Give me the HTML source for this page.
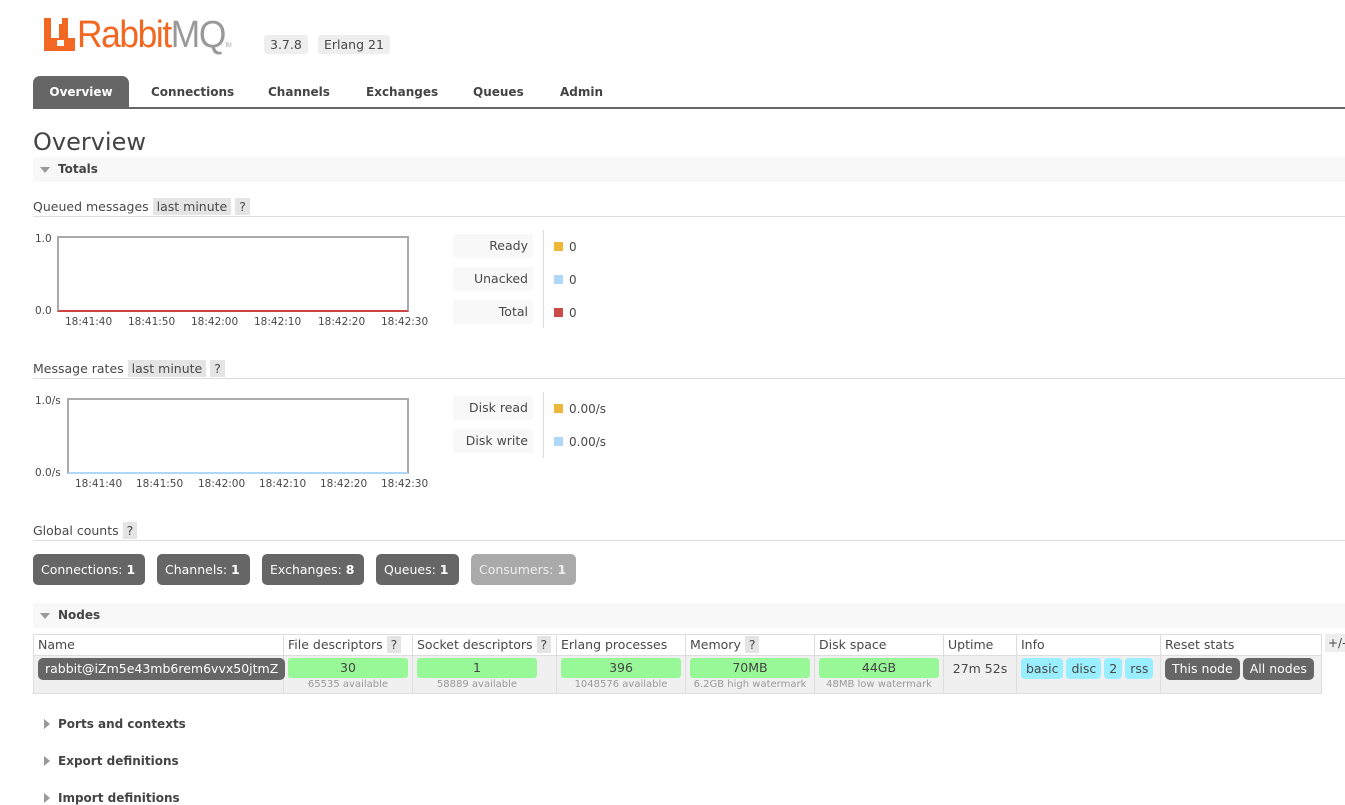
<!DOCTYPE html>
<html><head><meta charset="utf-8"><style>
*{box-sizing:border-box;margin:0;padding:0}
body{width:1345px;height:795px;overflow:hidden;background:#fff;font-family:"DejaVu Sans","Liberation Sans",sans-serif;font-size:12px;color:#484848;position:relative}
.a{position:absolute;white-space:nowrap}
.tab{position:absolute;top:76px;height:32px;line-height:32px;font-weight:bold;font-size:12px;color:#444}
.sec{position:absolute;left:33px;width:1312px;height:25px;background:#f8f8f8;font-weight:bold;font-size:12px;line-height:25px;padding-left:25px;color:#444}
.tri{position:absolute;left:7px;top:10px;width:0;height:0;border-left:5px solid transparent;border-right:5px solid transparent;border-top:6px solid #999}
.trr{position:absolute;left:11px;width:0;height:0;border-top:5px solid transparent;border-bottom:5px solid transparent;border-left:6px solid #999}
.hdr{position:absolute;left:33px;width:1312px;height:20px;border-bottom:1px solid #ddd;font-size:12.5px;line-height:20px}
.g{background:#e4e4e4;padding:1px 4px}
.lab{position:absolute;width:80px;height:24px;background:#f8f8f8;border-radius:3px;text-align:right;padding-right:5px;line-height:24px;font-size:12.5px}
.sq{display:inline-block;width:9px;height:9px;margin-right:6px}
.btn{position:absolute;top:554px;height:31px;line-height:31px;background:#666;color:#fff;border-radius:5px;padding:0 8px;font-size:12.5px}
td,th{border:1px solid #ddd;font-weight:normal;text-align:left;padding:0 4px;vertical-align:top}
.gr{background:#98f898;border-radius:3px;text-align:center;height:20px;line-height:20px;color:#444}
.sm{font-size:10px;color:#999;text-align:center;line-height:13px}
.cy{display:inline-block;background:#99eeff;border-radius:4px;padding:0 5px;height:21px;line-height:21px;margin-right:3px;font-size:12.5px}
.dk{display:inline-block;background:#666;color:#fff;border-radius:5px;padding:0 7px;height:22px;line-height:22px;margin-right:3px;font-size:12.5px}
.t{position:absolute;font-size:10.5px}
</style></head><body>
<div class="a" style="left:44px;top:18px;width:31px;height:33px">
<svg width="31" height="33"><path d="M0 0h7v20h8v-14h3v-6h6v20h7v13h-31z" fill="#f26822"/><rect x="13" y="22" width="7" height="6" fill="#fff"/></svg></div>
<div class="a" style="left:77px;top:14px;font-family:'Liberation Sans',sans-serif;font-size:38px;color:#f26822;letter-spacing:-1.5px;transform:scaleX(0.93);transform-origin:left">Rabbit<span style="color:#999">MQ</span><span style="font-size:6px;color:#aaa">TM</span></div>
<div class="a" style="left:264px;top:35px;background:#eee;padding:2px 6px;border-radius:3px;font-size:12.5px">3.7.8</div>
<div class="a" style="left:318px;top:35px;background:#eee;padding:2px 6px;border-radius:3px;font-size:12.5px">Erlang 21</div>
<div class="tab" style="left:33px;width:96px;background:#666;color:#fff;border-radius:7px 7px 0 0;text-align:center">Overview</div>
<div class="tab" style="left:151px">Connections</div>
<div class="tab" style="left:268px">Channels</div>
<div class="tab" style="left:366px">Exchanges</div>
<div class="tab" style="left:473px">Queues</div>
<div class="tab" style="left:560px">Admin</div>
<div class="a" style="left:33px;top:107px;width:1312px;height:2px;background:#666"></div>
<div class="a" style="left:33px;top:128px;font-size:24px;color:#444">Overview</div>
<div class="sec" style="top:157px"><div class="tri"></div>Totals</div>
<div class="hdr" style="top:197px">Queued messages <span class="g">last minute</span> <span class="g">?</span></div>
<div class="a" style="left:35px;top:233px;font-size:10.5px">1.0</div>
<div class="a" style="left:35px;top:305px;font-size:10.5px">0.0</div>
<div class="a" style="left:57px;top:236px;width:352px;height:76px;border:2px solid #aaa;border-bottom:2px solid #c44"></div>
<div class="a" style="top:316px;left:0">
<span class="t" style="left:65px">18:41:40</span><span class="t" style="left:128px">18:41:50</span><span class="t" style="left:191px">18:42:00</span><span class="t" style="left:254px">18:42:10</span><span class="t" style="left:318px">18:42:20</span><span class="t" style="left:381px">18:42:30</span></div>
<div class="lab" style="left:453px;top:234px">Ready</div>
<div class="lab" style="left:453px;top:267px">Unacked</div>
<div class="lab" style="left:453px;top:300px">Total</div>
<div class="a" style="left:543px;top:230px;width:1px;height:98px;background:#ddd"></div>
<div class="a" style="left:554px;top:240px"><span class="sq" style="background:#edb73a"></span>0</div>
<div class="a" style="left:554px;top:273px"><span class="sq" style="background:#afd8f8"></span>0</div>
<div class="a" style="left:554px;top:306px"><span class="sq" style="background:#cb4b4b"></span>0</div>
<div class="hdr" style="top:359px">Message rates <span class="g">last minute</span> <span class="g">?</span></div>
<div class="a" style="left:35px;top:395px;font-size:10.5px">1.0/s</div>
<div class="a" style="left:35px;top:467px;font-size:10.5px">0.0/s</div>
<div class="a" style="left:67px;top:398px;width:342px;height:76px;border:2px solid #aaa;border-bottom:2px solid #afd8f8"></div>
<div class="a" style="top:478px;left:0">
<span class="t" style="left:75px">18:41:40</span><span class="t" style="left:136px">18:41:50</span><span class="t" style="left:198px">18:42:00</span><span class="t" style="left:259px">18:42:10</span><span class="t" style="left:320px">18:42:20</span><span class="t" style="left:381px">18:42:30</span></div>
<div class="lab" style="left:453px;top:396px">Disk read</div>
<div class="lab" style="left:453px;top:429px">Disk write</div>
<div class="a" style="left:543px;top:392px;width:1px;height:66px;background:#ddd"></div>
<div class="a" style="left:554px;top:402px"><span class="sq" style="background:#edb73a"></span>0.00/s</div>
<div class="a" style="left:554px;top:435px"><span class="sq" style="background:#afd8f8"></span>0.00/s</div>
<div class="hdr" style="top:521px">Global counts <span class="g">?</span></div>
<div class="btn" style="left:33px;width:112px">Connections: <b>1</b></div>
<div class="btn" style="left:157px;width:93px">Channels: <b>1</b></div>
<div class="btn" style="left:262px;width:102px">Exchanges: <b>8</b></div>
<div class="btn" style="left:376px;width:83px">Queues: <b>1</b></div>
<div class="btn" style="left:471px;width:105px;background:#aaa;color:#eee">Consumers: <b>1</b></div>
<div class="sec" style="top:603px"><div class="tri"></div>Nodes</div>
<table class="a" style="left:33px;top:634px;border-collapse:collapse;font-size:12.5px;table-layout:fixed;width:1288px">
<colgroup><col style="width:250px"><col style="width:129px"><col style="width:144px"><col style="width:129px"><col style="width:129px"><col style="width:129px"><col style="width:73px"><col style="width:144px"><col style="width:161px"></colgroup>
<tr style="height:21px;line-height:19px"><th>Name</th><th>File descriptors <span class="g">?</span></th><th>Socket descriptors <span class="g">?</span></th><th>Erlang processes</th><th>Memory <span class="g">?</span></th><th>Disk space</th><th>Uptime</th><th>Info</th><th>Reset stats</th></tr>
<tr style="height:38px;background:#f0f0f0"><td style="padding-top:2px"><span class="dk" style="padding:0 7px">rabbit@iZm5e43mb6rem6vvx50jtmZ</span></td>
<td style="padding-top:2px"><div class="gr">30</div><div class="sm">65535 available</div></td>
<td style="padding-top:2px"><div class="gr" style="width:120px">1</div><div class="sm" style="width:120px">58889 available</div></td>
<td style="padding-top:2px"><div class="gr">396</div><div class="sm">1048576 available</div></td>
<td style="padding-top:2px"><div class="gr">70MB</div><div class="sm">6.2GB high watermark</div></td>
<td style="padding-top:2px"><div class="gr">44GB</div><div class="sm">48MB low watermark</div></td>
<td style="padding-top:2px;text-align:center;line-height:22px">27m 52s</td>
<td style="padding-top:2px"><span class="cy">basic</span><span class="cy">disc</span><span class="cy">2</span><span class="cy">rss</span></td>
<td style="padding-top:2px"><span class="dk">This node</span><span class="dk">All nodes</span></td></tr>
</table>
<div class="a" style="left:1325px;top:634px;background:#eee;padding:2px 3px;font-size:12px">+/-</div>
<div class="a" style="left:33px;top:717px;font-weight:bold;padding-left:25px;color:#444"><div class="trr" style="top:2px"></div>Ports and contexts</div>
<div class="a" style="left:33px;top:754px;font-weight:bold;padding-left:25px;color:#444"><div class="trr" style="top:2px"></div>Export definitions</div>
<div class="a" style="left:33px;top:791px;font-weight:bold;padding-left:25px;color:#444"><div class="trr" style="top:2px"></div>Import definitions</div>
</body></html>
